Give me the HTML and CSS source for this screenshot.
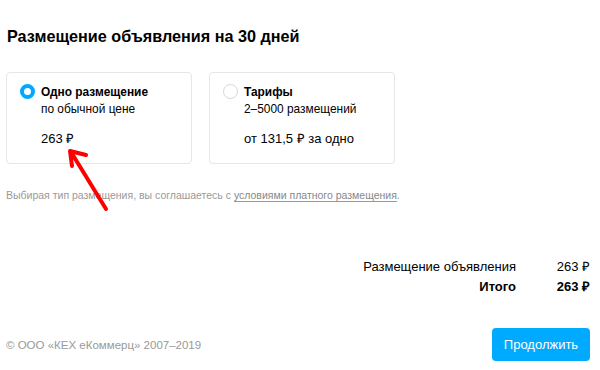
FILE: index.html
```html
<!DOCTYPE html>
<html lang="ru">
<head>
<meta charset="utf-8">
<link rel="stylesheet" href="styles.css">
</head>
<body>
<div class="page">
  <h1 class="title">Размещение объявления на 30 дней</h1>
  <div class="cards">
    <div class="card">
      <span class="radio radio-on"></span>
      <div class="card-body">
        <div class="card-name">Одно размещение</div>
        <div class="card-sub">по обычной цене</div>
        <div class="card-price">263 ₽</div>
      </div>
    </div>
    <div class="card">
      <span class="radio"></span>
      <div class="card-body">
        <div class="card-name">Тарифы</div>
        <div class="card-sub">2–5000 размещений</div>
        <div class="card-price">от 131,5 ₽ за одно</div>
      </div>
    </div>
  </div>
  <p class="note">Выбирая тип размещения, вы соглашаетесь с <a class="note-link" href="#">условиями платного размещения</a>.</p>
  <div class="summary">
    <span class="sum-label">Размещение объявления</span>
    <span class="sum-value">263 ₽</span>
    <span class="sum-label sum-bold">Итого</span>
    <span class="sum-value sum-bold">263 ₽</span>
  </div>
  <div class="footer">
    <span class="copy">© ООО «КЕХ еКоммерц» 2007–2019</span>
    <button class="btn">Продолжить</button>
  </div>
  <svg class="arrow" width="600" height="370" viewBox="0 0 600 370">
    <path d="M106 209 L71 152 M70 151 L86 155 M70 151 L72 166" stroke="#ff0000" stroke-width="4" fill="none" stroke-linecap="round" stroke-linejoin="round"/>
  </svg>
</div>
</body>
</html>
```

FILE: styles.css
```css
* { box-sizing: border-box; }
html, body { margin: 0; padding: 0; background: #fff; }
body {
  font-family: "Liberation Sans", Arial, sans-serif;
  color: #000;
  width: 600px;
  height: 370px;
  overflow: hidden;
}
.page {
  position: relative;
  display: flex;
  flex-direction: column;
  height: 370px;
  padding: 0 10px 0 6px;
}
.title {
  margin: 26px 0 0 1px;
  font-size: 16.2px;
  line-height: 20px;
  font-weight: bold;
}
.cards {
  display: flex;
  gap: 17px;
  margin-top: 26px;
}
.card {
  width: 186px;
  height: 92px;
  border: 1px solid #e6e6e6;
  border-radius: 4px;
  display: flex;
  align-items: flex-start;
  padding: 11px 0 0 13px;
}
.radio {
  width: 15px;
  height: 15px;
  border-radius: 50%;
  border: 1px solid #d6d6d6;
  flex: none;
  background: #fff;
}
.radio-on {
  border: 4.5px solid #00a8ff;
  background: #fff;
}
.card-body {
  margin-left: 6px;
  font-size: 11.9px;
  line-height: 16px;
}
.card-name { font-weight: bold; }
.card-sub { margin-top: 1px; }
.card-price { margin-top: 13px; font-size: 13px; line-height: 18px; }
.note {
  margin: 24px 0 0 0;
  font-size: 10.5px;
  line-height: 14px;
  color: #999;
}
.note-link {
  color: #888;
  text-decoration: none;
  border-bottom: 1px solid #999;
}
.summary {
  margin-top: 57px;
  display: grid;
  grid-template-columns: auto 37px;
  justify-content: end;
  column-gap: 37px;
  row-gap: 4px;
  font-size: 13px;
  line-height: 16px;
}
.sum-label { text-align: right; }
.sum-value { text-align: right; white-space: nowrap; }
.sum-bold { font-weight: bold; }
.footer {
  margin-top: 33px;
  display: flex;
  justify-content: space-between;
  align-items: center;
}
.copy {
  font-size: 11.5px;
  color: #999;
}
.btn {
  width: 98px;
  height: 33px;
  border: none;
  border-radius: 4px;
  background: #00aaff;
  color: #fff;
  font-family: "Liberation Sans", Arial, sans-serif;
  font-size: 13px;
  padding: 0;
}
.arrow {
  position: absolute;
  left: 0;
  top: 0;
  pointer-events: none;
}
```
